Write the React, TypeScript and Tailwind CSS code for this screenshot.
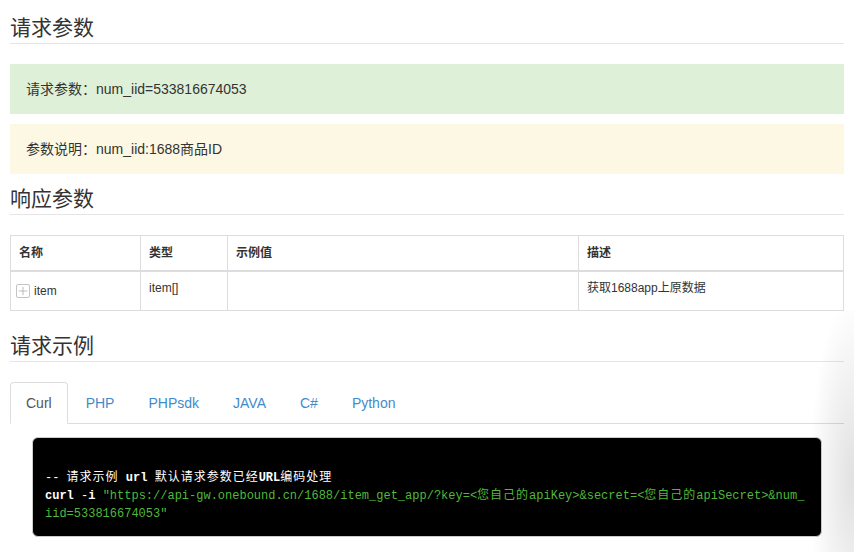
import React from "react"

const font = "font-['Liberation_Sans','Noto_Sans_CJK_SC',sans-serif]"
const mono = "font-['Liberation_Mono','Noto_Sans_CJK_SC',monospace]"

function Heading({ children }: { children: React.ReactNode }) {
  return (
    <h3 className="h-[31px] border-b border-[#e5e5e5] text-[21px] leading-[30px] font-normal text-[#333]">
      {children}
    </h3>
  )
}

function PlusBox() {
  return (
    <span className="inline-flex items-center justify-center w-[14px] h-[14px] border border-[#c4c4c4] rounded-[2px] bg-white">
      <svg viewBox="0 0 12 12" className="w-[10px] h-[10px]">
        <path d="M6 1v10M1 6h10" stroke="#b0b0b0" strokeWidth="1" />
      </svg>
    </span>
  )
}

// CJK glyphs in the code block are a bit wider than in Noto
function Cjk({ children }: { children: React.ReactNode }) {
  return <span className="tracking-[1px]">{children}</span>
}

const tabs = ["Curl", "PHP", "PHPsdk", "JAVA", "C#", "Python"]

export default function App() {
  return (
    <div className={`relative w-[854px] h-[552px] overflow-hidden bg-white ${font} text-[#333]`}>
      <div className="px-[10px] pt-[13px]">
        <Heading>请求参数</Heading>

        <div className="mt-[20px] h-[50px] flex items-center pl-4 bg-[#dff0d8] text-[14px]">
          请求参数：num_iid=533816674053
        </div>
        <div className="mt-[10px] h-[50px] flex items-center pl-4 bg-[#fcf8e3] text-[14px]">
          参数说明：num_iid:1688商品ID
        </div>

        <div className="mt-[10px]">
          <Heading>响应参数</Heading>
        </div>

        <table className="mt-[20px] w-[834px] table-fixed border-collapse text-[12px]">
          <colgroup>
            <col className="w-[130px]" />
            <col className="w-[87px]" />
            <col className="w-[351px]" />
            <col />
          </colgroup>
          <thead>
            <tr className="h-[35px]">
              <th className="border border-[#ddd] border-b-2 px-2 text-left font-bold">名称</th>
              <th className="border border-[#ddd] border-b-2 px-2 text-left font-bold">类型</th>
              <th className="border border-[#ddd] border-b-2 px-2 text-left font-bold">示例值</th>
              <th className="border border-[#ddd] border-b-2 px-2 text-left font-bold">描述</th>
            </tr>
          </thead>
          <tbody>
            <tr className="h-[40px]">
              <td className="border border-[#ddd] pl-[5px] align-middle">
                <div className="flex items-center gap-[4px] pt-[1px]">
                  <PlusBox />
                  <span>item</span>
                </div>
              </td>
              <td className="border border-[#ddd] px-2 pt-[7px] align-top">item[]</td>
              <td className="border border-[#ddd] px-2 align-top"></td>
              <td className="border border-[#ddd] px-2 pt-[7px] align-top">获取1688app上原数据</td>
            </tr>
          </tbody>
        </table>

        <div className="mt-[20px]">
          <Heading>请求示例</Heading>
        </div>

        <ul className="mt-[20px] flex border-b border-[#ddd] text-[14px]">
          {tabs.map((t, i) => (
            <li key={t} className="mr-[2px] -mb-px">
              <span
                className={
                  i === 0
                    ? "block px-[15px] py-[10px] leading-[20px] border border-[#ddd] border-b-white rounded-t-[4px] bg-white text-[#555]"
                    : "block px-[15px] py-[10px] leading-[20px] border border-transparent text-[#428bca]"
                }
              >
                {t}
              </span>
            </li>
          ))}
        </ul>

        <div className="pt-[13px] px-[22px]">
          <pre
            className={`bg-black border border-[#ccc] rounded-[6px] px-[12px] py-[13px] text-[12px] leading-[18px] text-white whitespace-pre ${mono}`}
          >
            <div>&nbsp;</div>
            <div>
              -- <Cjk>请求示例</Cjk> <b>url</b> <Cjk>默认请求参数已经</Cjk>
              <b>URL</b>
              <Cjk>编码处理</Cjk>
            </div>
            <div>
              <b>curl</b> -<b>i</b>{" "}
              <span className="text-[#50b83c]">
                "https://api-gw.onebound.cn/1688/item_get_app/?key=&lt;<Cjk>您自己的</Cjk>apiKey&gt;&amp;secret=&lt;
                <Cjk>您自己的</Cjk>apiSecret&gt;&amp;num_
              </span>
            </div>
            <div className="text-[#50b83c]">iid=533816674053"</div>
          </pre>
        </div>
      </div>

      <div className="pointer-events-none absolute right-0 top-[310px] w-[45px] h-[242px] bg-[radial-gradient(ellipse_100%_75%_at_100%_70%,rgba(0,0,0,0.12),transparent)]" />
    </div>
  )
}
